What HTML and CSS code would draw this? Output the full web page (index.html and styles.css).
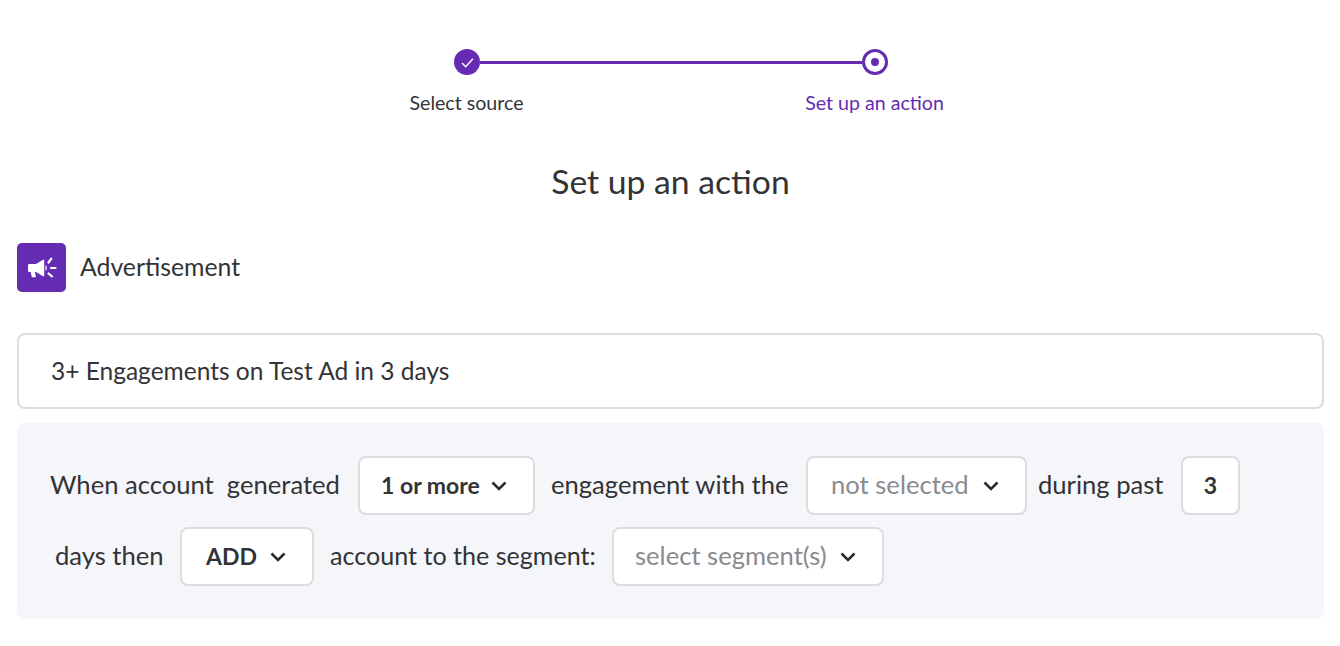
FILE: index.html
```html
<!DOCTYPE html>
<html lang="en">
<head>
    <meta charset="UTF-8">
    <title>Set up an action</title>
    <link rel="stylesheet" href="styles.css">
</head>
<body>

    <!-- Stepper -->
    <div class="stepper">
        <div class="track">
            <div class="dot dot-done">
                <svg width="17" height="17" viewBox="0 0 14 14"><path d="M2.500 7.500l3 3 6-6.500" fill="none" stroke="#fff" stroke-width="1.200"/></svg>
            </div>
            <div class="line"></div>
            <div class="dot dot-current"><span></span></div>
        </div>
        <div class="step-labels">
            <div class="step-label">Select source</div>
            <div class="step-label step-label-active">Set up an action</div>
        </div>
    </div>

    <h1 class="title">Set up an action</h1>

    <!-- Source -->
    <div class="source">
        <div class="source-icon">
            <svg width="30" height="24" viewBox="0 0 30 24">
                <path d="M1 9.500c0-1 .6-1.600 1.600-1.600H9L16 3.800c.6-.3 1.200 0 1.200.8v14.800c0 .8-.6 1.100-1.200.8L9 16.100H8l.8 4.200c.1.600-.2.900-.8.900H5.500c-.5 0-.8-.2-.9-.7l-.9-4.400H2.600c-1 0-1.600-.6-1.600-1.600z" fill="#fff"/>
                <path d="M18.500 9c1.600.5 1.600 5.500 0 6z" fill="#fff"/>
                <path d="M21.500 6.500l2.800-3.800M24 12h4.500M21.500 17.500l3.500 2.800" fill="none" stroke="#fff" stroke-width="2.200" stroke-linecap="round"/>
            </svg>
        </div>
        <div class="source-name">Advertisement</div>
    </div>

    <div class="name-box">3+ Engagements on Test Ad in 3 days</div>

    <!-- Rule -->
    <div class="rule">
        <div class="rule-row">
            <span class="txt t-when">When account&nbsp; generated</span>
            <div class="sel sel-count"><b>1 or more</b><svg class="chev" viewBox="0 0 16 10"><path d="M1.500 1.500L8 8l6.500-6.500"/></svg></div>
            <span class="txt t-engage">engagement with the</span>
            <div class="sel sel-target"><span class="muted">not selected</span><svg class="chev" viewBox="0 0 16 10"><path d="M1.500 1.500L8 8l6.500-6.500"/></svg></div>
            <span class="txt t-during">during past</span>
            <div class="sel sel-days"><b>3</b></div>
        </div>
        <div class="rule-row rule-row-2">
            <span class="txt t-days">days then</span>
            <div class="sel sel-add"><b>ADD</b><svg class="chev" viewBox="0 0 16 10"><path d="M1.500 1.500L8 8l6.500-6.500"/></svg></div>
            <span class="txt t-account">account to the segment:</span>
            <div class="sel sel-seg"><span class="muted">select segment(s)</span><svg class="chev" viewBox="0 0 16 10"><path d="M1.500 1.500L8 8l6.500-6.500"/></svg></div>
        </div>
    </div>

</body>
</html>
```

FILE: styles.css
```css
body {
    margin: 0;
    padding: 49px 16px 0 17px;
    font-family: Lato, "Noto Sans", sans-serif;
    color: #333336;
    background: #fff;
    overflow: hidden;
}
/* Stepper */
.stepper {
    display: flex;
    flex-direction: column;
    align-items: center;
}
.track {
    display: flex;
    align-items: center;
    width: 434px;
    margin-left: 1px;
}
.dot {
    width: 26px;
    height: 26px;
    box-sizing: border-box;
    border-radius: 50%;
    display: flex;
    align-items: center;
    justify-content: center;
    flex: none;
}
.dot-done {
    background: #652cb3;
}
.dot-current {
    border: 3px solid #652cb3;
}
.dot-current span {
    width: 8px;
    height: 8px;
    border-radius: 50%;
    background: #652cb3;
}
.line {
    flex: 1;
    height: 3px;
    background: #652cb3;
}
.step-labels {
    display: flex;
    justify-content: space-between;
    width: 608px;
    margin-top: 17px;
}
.step-label {
    width: 200px;
    text-align: center;
    font-size: 19.6px;
    line-height: 22px;
}
.step-label-active {
    color: #652cb3;
}
.title {
    margin: 47px 0 0;
    font-size: 33.7px;
    line-height: 40px;
    font-weight: 400;
    text-align: center;
}
/* Source */
.source {
    display: flex;
    align-items: center;
    margin-top: 42px;
}
.source-icon {
    width: 49px;
    height: 49px;
    border-radius: 5px;
    background: #652cb3;
    display: flex;
    align-items: center;
    justify-content: center;
}
.source-name {
    margin-left: 14px;
    padding-bottom: 2px;
    font-size: 24.8px;
}
.name-box {
    margin-top: 41px;
    height: 76px;
    box-sizing: border-box;
    border: 2px solid #dcdcdf;
    border-radius: 8px;
    padding: 0 0 2px 32px;
    display: flex;
    align-items: center;
    font-size: 24.5px;
}
/* Rule */
.rule {
    margin-top: 14px;
    height: 196px;
    box-sizing: border-box;
    background: #f4f6fa;
    border-radius: 8px;
    padding: 33px 0 0 33px;
}
.rule-row {
    display: flex;
    align-items: center;
    font-size: 25.6px;
    height: 59px;
}
.rule-row-2 {
    margin-top: 12px;
    padding-left: 5px;
}
.txt {
    white-space: nowrap;
    padding-bottom: 3px;
}
.t-when { width: 308px; }
.t-engage { width: 255px; margin-left: 16px; }
.t-during { width: 143px; margin-left: 11px; }
.t-days { width: 125px; }
.t-account { width: 282px; margin-left: 16px; font-size: 25.1px; }
.sel {
    height: 59px;
    box-sizing: border-box;
    background: #fff;
    border: 2px solid #dcdcdf;
    border-radius: 8px;
    display: flex;
    align-items: center;
    justify-content: space-between;
    flex: none;
}
.sel b {
    font-size: 23px;
    font-weight: 700;
    padding-bottom: 1px;
}
.muted {
    color: #8a8a8f;
    padding-bottom: 3px;
}
.chev {
    width: 16px;
    height: 10px;
    fill: none;
    stroke: #2c2c2e;
    stroke-width: 2.600;
}
.sel-count { width: 177px; padding: 0 26px 0 21px; }
.sel-target { width: 221px; padding: 0 26px 0 23px; }
.sel-days { width: 59px; justify-content: center; }
.sel-add { width: 134px; padding: 0 26px 0 24px; }
.sel-seg { width: 272px; padding: 0 26px 0 21px; }
```
